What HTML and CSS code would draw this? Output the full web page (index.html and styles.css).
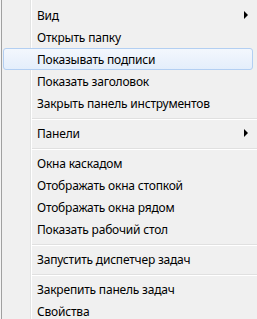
FILE: index.html
```html
<!DOCTYPE html>
<html lang="ru">
<head>
<meta charset="utf-8">
<link rel="stylesheet" href="styles.css">
</head>
<body>
<div class="menu">
  <div class="item sub"><span>Вид</span><i class="arrow"></i></div>
  <div class="item"><span>Открыть папку</span></div>
  <div class="item hl"><span>Показывать подписи</span></div>
  <div class="item"><span>Показать заголовок</span></div>
  <div class="item"><span>Закрыть панель инструментов</span></div>
  <div class="sep"></div>
  <div class="item sub"><span>Панели</span><i class="arrow"></i></div>
  <div class="sep"></div>
  <div class="item"><span>Окна каскадом</span></div>
  <div class="item"><span>Отображать окна стопкой</span></div>
  <div class="item"><span>Отображать окна рядом</span></div>
  <div class="item"><span>Показать рабочий стол</span></div>
  <div class="sep"></div>
  <div class="item"><span>Запустить диспетчер задач</span></div>
  <div class="sep"></div>
  <div class="item"><span>Закрепить панель задач</span></div>
  <div class="item"><span>Свойства</span></div>
</div>
</body>
</html>
```
FILE: styles.css
```css
html, body {
  margin: 0;
  padding: 0;
  background: #f0f0f0;
}
.menu {
  width: 257px;
  height: 319px;
  overflow: hidden;
  box-sizing: border-box;
  padding-top: 4px;
  font-family: "Noto Sans", "Open Sans", sans-serif;
  font-size: 12px;
  letter-spacing: -0.2px;
  color: #000;
  background:
    linear-gradient(to right, #f4f4f4 0, #f4f4f4 1px, #a0a0a0 1px, #a0a0a0 2px, transparent 2px, transparent 30px, #e2e3e3 30px, #e2e3e3 31px, #ffffff 31px, #ffffff 32px, transparent 32px),
    #f0f0f0;
}
.item {
  height: 22px;
  box-sizing: border-box;
  display: flex;
  align-items: center;
  justify-content: space-between;
  padding-left: 37px;
  padding-right: 9px;
  white-space: nowrap;
}
.item.hl {
  margin: 0 4px 0 3px;
  padding-left: 33px;
  padding-right: 4px;
  border: 1px solid #b3cff2;
  border-radius: 3px;
  background: linear-gradient(#f3f7fd, #e4eefb);
}
.arrow {
  width: 0;
  height: 0;
  border-top: 4px solid transparent;
  border-bottom: 4px solid transparent;
  border-left: 4px solid #000;
}
.sep {
  height: 8px;
  margin-left: 32px;
  display: flex;
  align-items: center;
}
.sep::before {
  content: "";
  flex: 1;
  height: 1px;
  background: #e0e0e0;
  box-shadow: 0 1px #ffffff;
}
```
